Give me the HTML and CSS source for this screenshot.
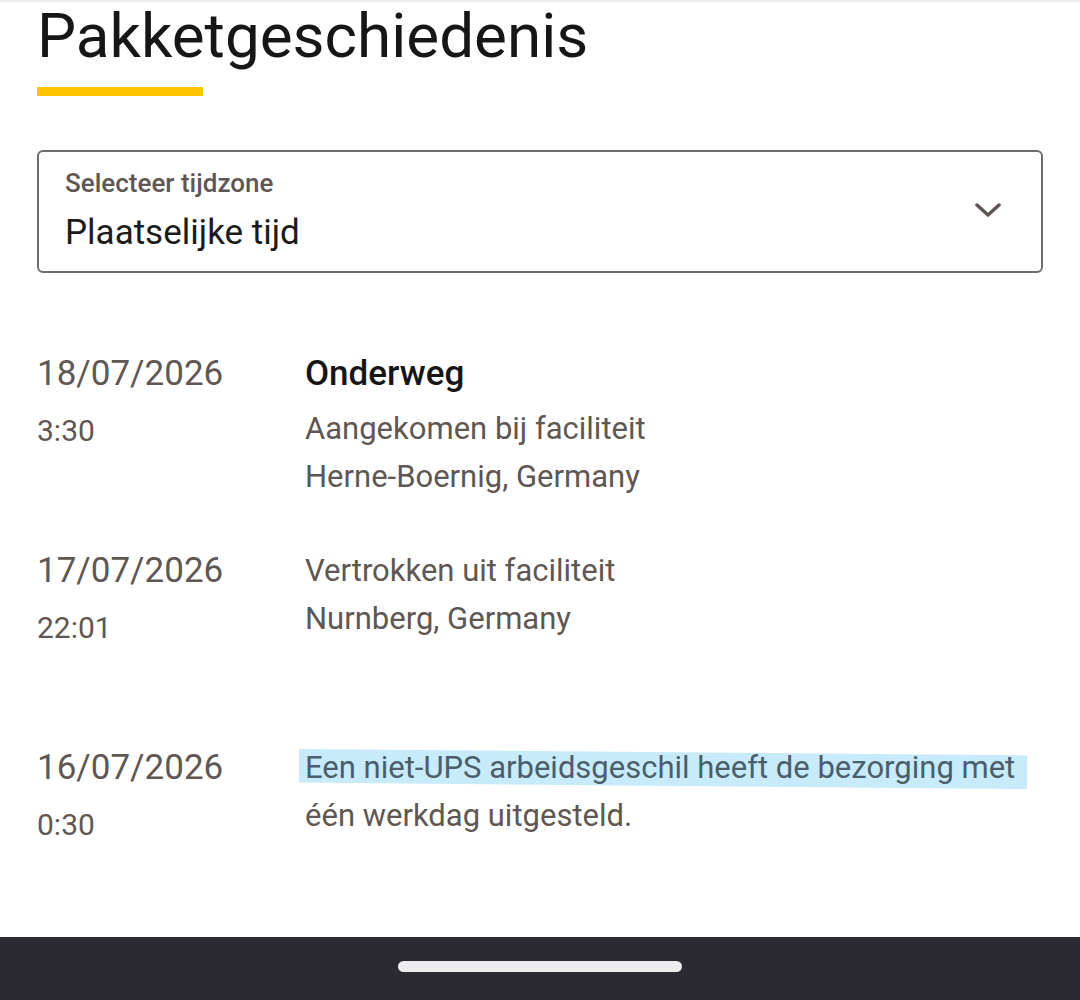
FILE: index.html
```html
<!DOCTYPE html>
<html lang="nl">
<head>
  <meta charset="UTF-8">
  <meta name="viewport" content="width=device-width, initial-scale=1.0">
  <title>Pakketgeschiedenis</title>
  <link rel="stylesheet" href="styles.css">
</head>
<body>
  <main class="page">
    <h1 class="title">Pakketgeschiedenis</h1>
    <div class="title-bar"></div>

    <div class="select">
      <div class="select-text">
        <div class="select-label">Selecteer tijdzone</div>
        <div class="select-value">Plaatselijke tijd</div>
      </div>
      <svg class="chevron" width="26" height="16" viewBox="0 0 26 16">
        <polyline points="2,3 13,13 24,3" fill="none" stroke="#5f5753" stroke-width="3.5" stroke-linecap="round" stroke-linejoin="round"/>
      </svg>
    </div>

    <div class="history">
      <div class="event">
        <div class="when">
          <div class="date">18/07/2026</div>
          <div class="time">3:30</div>
        </div>
        <div class="what">
          <div class="status">Onderweg</div>
          <div class="line">Aangekomen bij faciliteit</div>
          <div class="line">Herne-Boernig, Germany</div>
        </div>
      </div>

      <div class="event">
        <div class="when">
          <div class="date">17/07/2026</div>
          <div class="time">22:01</div>
        </div>
        <div class="what">
          <div class="line">Vertrokken uit faciliteit</div>
          <div class="line">Nurnberg, Germany</div>
        </div>
      </div>

      <div class="event">
        <div class="when">
          <div class="date">16/07/2026</div>
          <div class="time">0:30</div>
        </div>
        <div class="what">
          <div class="line"><span class="marked">Een niet-UPS arbeidsgeschil heeft de bezorging met</span> één werkdag uitgesteld.</div>
        </div>
      </div>
    </div>
  </main>

  <div class="navbar">
    <div class="nav-pill"></div>
  </div>
</body>
</html>
```

FILE: styles.css
```css
body {
  margin: 0;
  height: 100vh;
  display: flex;
  flex-direction: column;
  font-family: Roboto, "Noto Sans", sans-serif;
  background-color: #fff;
  color: #5f5753;
}
.page {
  flex: 1;
  min-height: 0;
  overflow: hidden;
  padding: 0 37px;
  border-top: 2px solid #eeeeee;
}
.title {
  margin: -2px 0 0;
  font-size: 62px;
  line-height: 72px;
  font-weight: 400;
  color: #161616;
}
.title-bar {
  width: 166px;
  height: 9px;
  margin-top: 15px;
  background-color: #ffc400;
}
.select {
  margin-top: 54px;
  height: 119px;
  border: 2px solid #716b68;
  border-radius: 6px;
  display: flex;
  align-items: center;
  justify-content: space-between;
  padding: 0 40px 0 26px;
}
.select-text {
  margin-bottom: 2px;
}
.select-label {
  font-size: 26px;
  line-height: 30px;
  font-weight: 500;
  color: #5f5753;
}
.select-value {
  margin-top: 14px;
  font-size: 35px;
  line-height: 42px;
  color: #1c1b1b;
}
.chevron {
  margin-bottom: 4px;
}
.history {
  margin-top: 77px;
}
.event {
  display: grid;
  grid-template-columns: 268px 1fr;
  height: 197px;
}
.date {
  font-size: 35px;
  line-height: 48px;
}
.time {
  margin-top: 9px;
  font-size: 30px;
  line-height: 48px;
}
.status {
  font-size: 35px;
  line-height: 48px;
  font-weight: 500;
  color: #161616;
  margin-bottom: 7px;
}
.line {
  font-size: 31px;
  line-height: 48px;
}
.marked {
  position: relative;
  display: inline-block;
  color: #4a5e6b;
  z-index: 0;
}
.marked::before {
  content: "";
  position: absolute;
  left: -6px;
  right: -12px;
  top: 5px;
  bottom: 3px;
  background-color: #c8ebfb;
  clip-path: polygon(0 0, 100% 16%, 100% 100%, 0 84%);
  z-index: -1;
}
.navbar {
  height: 63px;
  flex-shrink: 0;
  background-color: #2b2932;
  display: flex;
  justify-content: center;
  align-items: center;
}
.nav-pill {
  width: 284px;
  height: 11px;
  border-radius: 6px;
  background-color: #ececee;
  margin-bottom: 4px;
}
```
